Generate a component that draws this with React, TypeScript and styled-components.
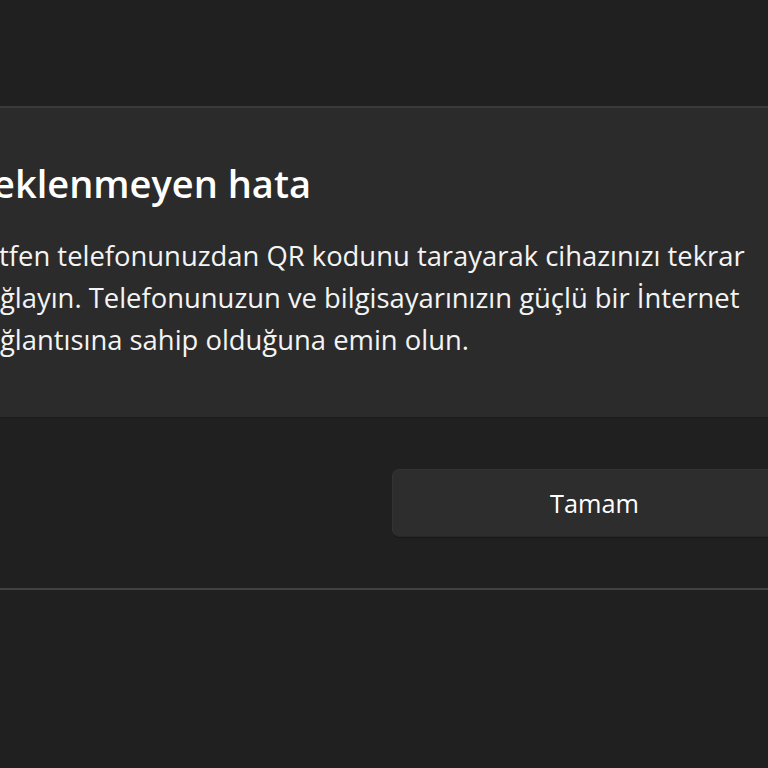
import React from "react";
import styled, { createGlobalStyle } from "styled-components";

const GlobalStyle = createGlobalStyle`
  html, body {
    margin: 0;
    padding: 0;
    background: #202020;
    overflow: hidden;
  }
  body {
    font-family: "Open Sans", "Noto Sans", sans-serif;
    -webkit-font-smoothing: antialiased;
  }
`;

const Page = styled.div`
  width: 768px;
  height: 768px;
  overflow: hidden;
  background: #202020;
  display: flex;
  flex-direction: column;
  padding-top: 106px;
  box-sizing: border-box;
`;

const Dialog = styled.section`
  width: 926px;
  margin-left: -79px;
  flex-shrink: 0;
  background: #202020;
  border-top: 2px solid #3b3b3b;
  border-bottom: 2px solid #414141;
  display: flex;
  flex-direction: column;
`;

const ContentArea = styled.div`
  background: #2b2b2b;
  padding: 51px 50px 56px 47px;
  display: flex;
  flex-direction: column;
  gap: 27px;
`;

const Title = styled.h1`
  margin: 0;
  font-size: 38px;
  font-weight: 600;
  line-height: 49px;
  color: #ffffff;
  letter-spacing: 0;
`;

const Message = styled.p`
  margin: 0;
  font-size: 27.4px;
  font-weight: 400;
  line-height: 42px;
  color: #f4f4f4;
`;

const Footer = styled.div`
  border-top: 1px solid #1b1b1b;
  padding: 51px 50px 51px 50px;
  display: grid;
  grid-template-columns: 1fr 1fr;
  column-gap: 16px;
`;

const Button = styled.button<{ $col: number }>`
  grid-column: ${(p) => p.$col};
  height: 68px;
  border-radius: 7px;
  background: #2d2d2d;
  border: 1px solid #333333;
  border-bottom-color: #282828;
  box-shadow: 0 1px 0 rgba(0, 0, 0, 0.25);
  color: #ffffff;
  font-family: "Open Sans", "Noto Sans", sans-serif;
  font-size: 25.3px;
  font-weight: 400;
  padding: 0;
  cursor: pointer;
`;

export default function App() {
  return (
    <>
      <GlobalStyle />
      <Page>
        <Dialog>
          <ContentArea>
            <Title>Beklenmeyen hata</Title>
            <Message>
              Lütfen telefonunuzdan QR kodunu tarayarak cihazınızı tekrar bağlayın. Telefonunuzun ve
              bilgisayarınızın güçlü bir İnternet bağlantısına sahip olduğuna emin olun.
            </Message>
          </ContentArea>
          <Footer>
            <Button $col={2}>Tamam</Button>
          </Footer>
        </Dialog>
      </Page>
    </>
  );
}
